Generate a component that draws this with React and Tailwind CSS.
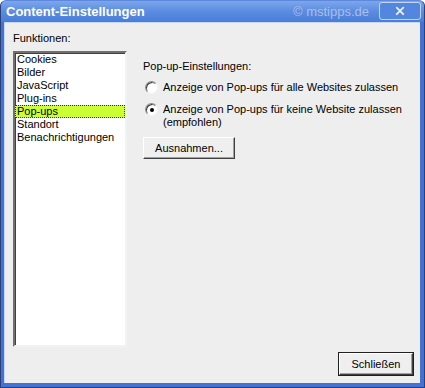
// Content-Einstellungen dialog (XP look)

const items = ['Cookies', 'Bilder', 'JavaScript', 'Plug-ins', 'Pop-ups', 'Standort', 'Benachrichtigungen'];

const Radio = ({ checked }) => (
  <span className="w-[13px] h-[13px] shrink-0 rounded-full bg-white border border-t-[#8d8d8d] border-l-[#8d8d8d] border-b-[#f4f4f4] border-r-[#f4f4f4] shadow-[inset_1px_1px_0_#3c3c3c] flex items-center justify-center">
    {checked && <span className="w-[4px] h-[4px] rounded-full bg-black" />}
  </span>
);

const Button = ({ children, className = '' }) => (
  <button className={`bg-[#efefef] border border-t-white border-l-white border-r-[#404040] border-b-[#404040] shadow-[inset_-1px_-1px_0_#a0a0a0] text-[11px] leading-[13px] text-black ${className}`}>
    {children}
  </button>
);

export default function App() {
  return (
    <div className="w-[425px] h-[388px] bg-[#4372d4] rounded-t-[6px] border border-[#2b3f78] border-t-[#5c89dd] flex flex-col overflow-hidden" style={{ fontFamily: '"Liberation Sans", Arial, sans-serif' }}>
      {/* Title bar */}
      <div className="h-[21px] shrink-0 bg-gradient-to-b from-[#7ea6ea] via-[#5a8ce1] to-[#4a7dd8] flex items-center pl-[5px] pr-[3px]">
        <span className="text-white font-bold text-[13px] leading-none">Content-Einstellungen</span>
        <span className="ml-auto mr-[10px] text-[#a9bfe8] text-[13px] leading-none">© mstipps.de</span>
        <span className="w-[42px] h-[18px] mt-[-2px] rounded-[3px] border border-[#c3d3f2] bg-[#5386de] flex items-center justify-center text-[#e7edf9] text-[14px] font-bold leading-none [text-shadow:0_0_1px_#223f80]">
          ✕
        </span>
      </div>

      {/* Body */}
      <div className="flex-1 ml-[3px] mr-[4px] mb-[4px] bg-[#eeeeee] border-l border-t border-[#c8d7f3] flex flex-col pl-[8px] pr-[7px] pb-[8px] text-[11px] leading-[13px] text-black">
        <div className="flex flex-1">
          {/* Left: Funktionen */}
          <div className="flex flex-col pt-[9px]">
            <span>Funktionen:</span>
            <div className="mt-[6px] w-[114px] h-[296px] bg-white border-2 border-t-[#707070] border-l-[#707070] border-b-[#f2f2f2] border-r-[#f2f2f2] shadow-[inset_1px_1px_0_#404040] flex flex-col">
              {items.map((item) =>
                item === 'Pop-ups' ? (
                  <div key={item} className="h-[13px] pl-[1px] bg-[#ccff33] border border-dotted border-[#333333] leading-[11px]">
                    {item}
                  </div>
                ) : (
                  <div key={item} className="h-[13px] pl-[2px]">
                    {item}
                  </div>
                )
              )}
            </div>
          </div>

          {/* Right: Pop-up-Einstellungen */}
          <div className="flex flex-col pl-[16px] pt-[37px]">
            <span>Pop-up-Einstellungen:</span>
            <div className="mt-[8px] flex items-start gap-[5px] pl-[2px]">
              <Radio />
              <span>Anzeige von Pop-ups für alle Websites zulassen</span>
            </div>
            <div className="mt-[9px] flex items-start gap-[5px] pl-[2px]">
              <Radio checked />
              <span>
                Anzeige von Pop-ups für keine Website zulassen
                <br />
                (empfohlen)
              </span>
            </div>
            <Button className="mt-[8px] w-[92px] h-[22px]">Ausnahmen...</Button>
          </div>
        </div>

        {/* Footer */}
        <div className="flex justify-end mt-[5px]">
          <Button className="w-[74px] h-[22px] outline outline-1 outline-[#202020]">Schließen</Button>
        </div>
      </div>
    </div>
  );
}
